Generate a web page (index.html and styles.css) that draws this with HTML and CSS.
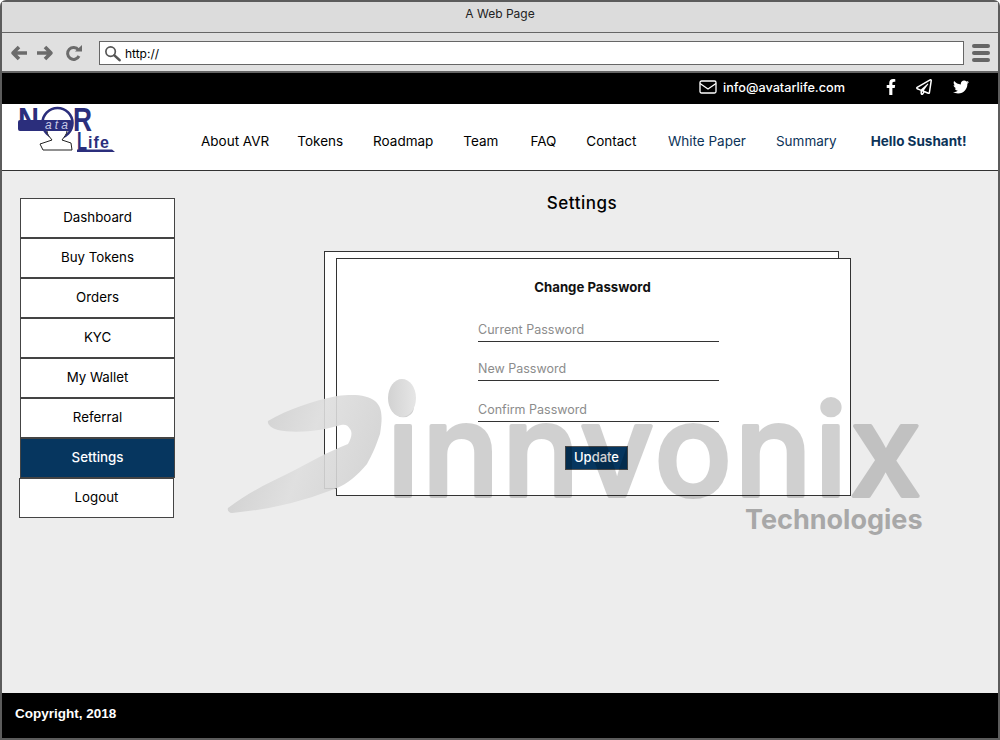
FILE: index.html
```html
<!DOCTYPE html>
<html lang="en">
<head>
    <meta charset="UTF-8">
    <meta name="viewport" content="width=device-width, initial-scale=1.0">
    <title>A Web Page</title>
    <link rel="stylesheet" href="styles.css">
</head>
<body>
    <div class="browser">
        <div class="title-bar">A Web Page</div>
        <div class="tool-bar">
            <svg class="tool-icon" viewBox="0 0 18 18"><path d="M9 3 3 9l6 6M3.500 9H17" fill="none" stroke="#6b6b6b" stroke-width="3.600" stroke-linejoin="round"/></svg>
            <svg class="tool-icon" viewBox="0 0 18 18"><path d="m9 3 6 6-6 6M14.500 9H1" fill="none" stroke="#6b6b6b" stroke-width="3.600" stroke-linejoin="round"/></svg>
            <svg class="tool-icon reload" viewBox="0 0 18 18"><path d="M14 12a6 6 0 1 1-.6-6.200" fill="none" stroke="#6b6b6b" stroke-width="3"/><path d="M10 7.500h7V1z" fill="#6b6b6b"/></svg>
            <div class="address">
                <svg class="search" viewBox="0 0 18 18"><circle cx="7" cy="7" r="5" fill="none" stroke="#555" stroke-width="1.800"/><path d="m11 11 5.500 5" stroke="#555" stroke-width="2.800" stroke-linecap="round"/></svg>
                <span>http://</span>
            </div>
            <div class="burger"><i></i><i></i><i></i></div>
        </div>

        <div class="top-bar">
            <svg class="mail" viewBox="0 0 18 14"><rect x="1" y="1" width="16" height="12" rx="1.500" fill="none" stroke="#fff" stroke-width="1.300"/><path d="m1 3.500 8 5.500 8-5.500" fill="none" stroke="#fff" stroke-width="1.300"/></svg>
            <span class="email">info@avatarlife.com</span>
            <div class="socials">
                <svg class="fb" viewBox="0 0 320 512"><path fill="#fff" d="M279.14 288l14.22-92.66h-88.91v-60.13c0-25.35 12.42-50.06 52.24-50.06h40.42V6.26S260.43 0 225.36 0c-73.22 0-121.08 44.38-121.08 124.72v70.62H22.89V288h81.39v224h100.17V288z"/></svg>
                <svg class="plane" viewBox="0 0 512 512"><path fill="#fff" d="M440 6.500L24 246.400c-34.400 19.900-31.100 70.800 5.700 85.900L144 379.600V464c0 46.400 59.200 65.500 86.600 28.600l43.800-59.100 111.900 46.200c5.900 2.400 12.100 3.600 18.300 3.600 8.200 0 16.300-2.100 23.600-6.200 12.800-7.200 21.600-20 23.900-34.500l59.400-387.200c6.100-40.100-36.900-68.800-71.500-48.900zM192 464v-64.600l36.600 15.100L192 464zm212.600-28.700l-153.800-63.500L391 169.500c10.700-15.500-9.500-33.500-23.700-21.200L155.800 332.600 48 288 464 48l-59.400 387.300z"/></svg>
                <svg class="tw" viewBox="0 0 512 512"><path fill="#fff" d="M459.37 151.716c.325 4.548.325 9.097.325 13.645 0 138.72-105.583 298.558-298.558 298.558-59.452 0-114.68-17.219-161.137-47.106 8.447.974 16.568 1.299 25.34 1.299 49.055 0 94.213-16.568 130.274-44.832-46.132-.975-84.792-31.188-98.112-72.772 6.498.974 12.995 1.624 19.818 1.624 9.421 0 18.843-1.3 27.614-3.573-48.081-9.747-84.143-51.98-84.143-102.985v-1.299c13.969 7.797 30.214 12.67 47.431 13.319-28.264-18.843-46.781-51.005-46.781-87.391 0-19.492 5.197-37.36 14.294-52.954 51.655 63.675 129.3 105.258 216.365 109.807-1.624-7.797-2.599-15.918-2.599-24.04 0-57.828 46.782-104.934 104.934-104.934 30.213 0 57.502 12.67 76.67 33.137 23.715-4.548 46.456-13.32 66.599-25.34-7.798 24.366-24.366 44.833-46.132 57.827 21.117-2.273 41.584-8.122 60.426-16.243-14.292 20.791-32.161 39.308-52.628 54.253z"/></svg>
            </div>
        </div>

        <header class="site-header">
            <svg class="logo" viewBox="0 0 100 50">
                <circle cx="40.500" cy="18" r="15" fill="#fff" stroke="#2b2e7c" stroke-width="2.600"/>
                <text class="logo-cap" x="1" y="26" textLength="21" lengthAdjust="spacingAndGlyphs">N</text>
                <text class="logo-cap" x="56" y="26" textLength="19" lengthAdjust="spacingAndGlyphs">R</text>
                <rect x="1" y="15" width="54" height="11" rx="2" fill="#2b2e7c"/>
                <text class="logo-ata" x="28" y="24" textLength="23">ata</text>
                <path d="M30 26c0 4 3 6 5 9l-12 4 3 6h29l-1-7-9-3c2-3 5-6 5-9" fill="#fff" stroke="#222" stroke-width="1"/>
                <text class="logo-l" x="60" y="45" textLength="10" lengthAdjust="spacingAndGlyphs">L</text>
                <text class="logo-life" x="71" y="43" textLength="21">ife</text>
                <path d="M60 44.500h35l3 2.500H60z" fill="#2b2e7c"/>
            </svg>
            <nav class="main-nav">
                <a href="#" class="about">About AVR</a>
                <a href="#">Tokens</a>
                <a href="#">Roadmap</a>
                <a href="#" class="team">Team</a>
                <a href="#">FAQ</a>
                <a href="#" class="contact">Contact</a>
                <a href="#" class="blue">White Paper</a>
                <a href="#" class="blue summary">Summary</a>
                <a href="#" class="hello">Hello Sushant!</a>
            </nav>
        </header>

        <main class="content">
            <ul class="side-menu">
                <li>Dashboard</li>
                <li>Buy Tokens</li>
                <li>Orders</li>
                <li>KYC</li>
                <li>My Wallet</li>
                <li>Referral</li>
                <li class="active">Settings</li>
                <li class="logout">Logout</li>
            </ul>
            <section class="settings">
                <h1>Settings</h1>
                <div class="card-stack">
                    <form class="card">
                        <h2>Change Password</h2>
                        <div class="field field-1">Current Password</div>
                        <div class="field field-2">New Password</div>
                        <div class="field field-3">Confirm Password</div>
                        <button type="button">Update</button>
                    </form>
                </div>
            </section>
            <svg class="watermark" viewBox="0 0 1000 740">
                <defs>
                    <linearGradient id="swoosh" x1="0" y1="0" x2="1" y2="0.300">
                        <stop offset="0" stop-color="#c6c6c6"/>
                        <stop offset="0.600" stop-color="#dedede"/>
                        <stop offset="1" stop-color="#d2d2d2"/>
                    </linearGradient>
                    <linearGradient id="dot" x1="0" y1="0" x2="1" y2="0">
                        <stop offset="0" stop-color="#d2d2d2"/>
                        <stop offset="1" stop-color="#e6e6e6"/>
                    </linearGradient>
                </defs>
                <path d="M268 420c20-12 45-20 69-25 18-2 30-1 38 5 7 6 8 15 5 33-4 12-8 21-13 30-10 12-20 20-30 24-25 10-60 21-105 25-3 0-5-3-4-5 20-15 42-26 59-34 20-10 40-22 61-30 3-5 5-11 2-15-2-4-5-5-9-4-10 3-20 5-30 6-12 1-24 1-33-1-7-2-11-6-10-9z" fill="url(#swoosh)" fill-opacity="0.900"/>
                <g class="wm-word">
                    <text x="387" y="495">innvonix</text>
                </g>
                <ellipse cx="402" cy="397" rx="14" ry="19" fill="url(#dot)"/>
                <text class="wm-sub" x="745" y="528">Technologies</text>
            </svg>
        </main>

        <footer class="site-footer">Copyright, 2018</footer>
    </div>
</body>
</html>
```

FILE: styles.css
```css
* {
    box-sizing: border-box;
}
html, body {
    margin: 0;
    padding: 0;
}
body {
    width: 1000px;
    height: 740px;
    overflow: hidden;
    font-family: Inter, "Liberation Sans", sans-serif;
    font-size: 13.3px;
    color: #000;
}
.browser {
    position: relative;
    width: 1000px;
    height: 740px;
    display: flex;
    flex-direction: column;
    border: 2px solid #5c5c5c;
    border-radius: 6px 6px 0 0;
    background: #ededed;
}
.title-bar {
    height: 31px;
    flex: none;
    padding-top: 4px;
    background: #dcdcdc;
    border-bottom: 1px solid #666;
    text-align: center;
    font-size: 12px;
    line-height: 15px;
    color: #222;
}
.tool-bar {
    height: 40px;
    flex: none;
    display: flex;
    align-items: center;
    padding: 2px 8px 0 8px;
    background: #e0e0e0;
    border-bottom: 2px solid #666;
}
.tool-icon {
    width: 18px;
    height: 18px;
    margin-right: 8px;
}
.tool-icon.reload {
    margin-left: 3px;
    margin-right: 16px;
}
.address {
    width: 866px;
    height: 24px;
    display: flex;
    align-items: center;
    padding-left: 4px;
    background: #fff;
    border: 1px solid #666;
    font-size: 12px;
}
.search {
    width: 17px;
    height: 17px;
    margin-right: 4px;
}
.burger {
    margin-left: 8px;
    display: flex;
    flex-direction: column;
    gap: 3px;
}
.burger i {
    display: block;
    width: 18px;
    height: 4px;
    border-radius: 2px;
    background: #666;
}
.top-bar {
    height: 31px;
    flex: none;
    display: flex;
    align-items: center;
    background: #000;
    color: #fff;
    padding: 0 0 3px 697px;
}
.mail {
    width: 18px;
    height: 14px;
    margin-right: 6px;
}
.email {
    font-size: 12.7px;
    font-weight: 500;
    width: 161px;
}
.socials {
    display: flex;
    align-items: center;
}
.fb {
    width: 10px;
    height: 16px;
    margin-left: 2px;
}
.plane {
    width: 16px;
    height: 16px;
    margin-left: 20px;
}
.tw {
    width: 16px;
    height: 16px;
    margin-left: 21px;
}
.site-header {
    height: 67px;
    flex: none;
    display: flex;
    background: #fff;
    border-bottom: 1px solid #333;
}
.logo {
    width: 100px;
    height: 50px;
    margin: 1px 0 0 15px;
    overflow: visible;
}
.logo text {
    font-family: "Liberation Sans", sans-serif;
    font-weight: 700;
    fill: #2b2e7c;
}
.logo .logo-cap {
    font-size: 33px;
}
.logo .logo-ata {
    font-size: 12px;
    font-weight: 400;
    font-style: italic;
    fill: #c9cbe8;
}
.logo .logo-l {
    font-size: 25px;
}
.logo .logo-life {
    font-size: 16px;
}
.main-nav {
    display: flex;
    align-items: baseline;
    gap: 30px;
    margin-left: 84px;
    padding-top: 29px;
    font-size: 13.5px;
}
.main-nav a {
    color: #000;
    text-decoration: none;
    white-space: nowrap;
}
.main-nav .about {
    margin-right: -2px;
}
.main-nav .team {
    margin-right: 2px;
}
.main-nav .contact {
    margin-right: 1.500px;
}
.main-nav .summary {
    margin-right: 4px;
}
.main-nav .blue {
    color: #0c3358;
}
.main-nav .hello {
    color: #0c3358;
    font-weight: 700;
}
.content {
    position: relative;
    flex: 1;
    display: flex;
    align-items: flex-start;
    background: #ededed;
}
.side-menu {
    list-style: none;
    width: 155px;
    margin: 27px 0 0 18px;
    padding: 0;
}
.side-menu li {
    height: 40px;
    display: flex;
    align-items: center;
    justify-content: center;
    padding-bottom: 2px;
    background: #fff;
    border: 1px solid #444;
}
.side-menu .active {
    background: #06365f;
    color: #fff;
    font-weight: 500;
}
.side-menu .logout {
    margin-left: -1px;
    margin-right: 1px;
}
.settings {
    width: 800px;
    position: relative;
}
h1 {
    margin: 21px 0 0 0;
    padding-left: 14px;
    text-align: center;
    font-size: 17px;
    line-height: 22px;
    font-weight: 500;
    letter-spacing: 0.500px;
}
.card-stack {
    position: relative;
    width: 515px;
    height: 238px;
    margin: 37px 0 0 149px;
    background: #fff;
    border: 1px solid #333;
}
.card {
    position: absolute;
    left: 11px;
    top: 6px;
    width: 515px;
    height: 238px;
    background: #fff;
    border: 1px solid #333;
    padding-left: 141px;
}
h2 {
    margin: 20px 0 0 -143px;
    text-align: center;
    font-size: 13.2px;
    line-height: 17px;
    font-weight: 700;
    color: #111;
}
.field {
    width: 241px;
    height: 22px;
    border-bottom: 1px solid #333;
    color: #8c8c8c;
    font-size: 12.5px;
    line-height: 20px;
}
.field-1 {
    margin-top: 24px;
}
.field-2 {
    margin-top: 17px;
}
.field-3 {
    margin-top: 19px;
}
button {
    display: block;
    width: 63px;
    height: 24px;
    margin: 24px 0 0 87px;
    padding: 0 0 2px;
    background: #06365f;
    color: #fff;
    border: 1px solid #555;
    font-family: inherit;
    font-size: 13px;
    font-weight: 500;
}
.watermark {
    position: absolute;
    left: -2px;
    top: -170px;
    width: 1000px;
    height: 740px;
    pointer-events: none;
}
.wm-word {
    opacity: 0.18;
}
.wm-word text {
    font-family: Inter, "Liberation Sans", sans-serif;
    font-size: 128px;
    font-weight: 500;
    letter-spacing: 3px;
    fill: #000;
    stroke: #000;
    stroke-width: 4px;
    stroke-linejoin: round;
}
.wm-sub {
    font-family: Inter, "Liberation Sans", sans-serif;
    font-size: 27px;
    font-weight: 700;
    fill: #a8a8a8;
}
.site-footer {
    height: 45px;
    flex: none;
    display: flex;
    align-items: center;
    padding: 0 0 4px 13px;
    background: #000;
    color: #fff;
    font-family: "Liberation Sans", sans-serif;
    font-size: 13.5px;
    font-weight: 700;
}
```
